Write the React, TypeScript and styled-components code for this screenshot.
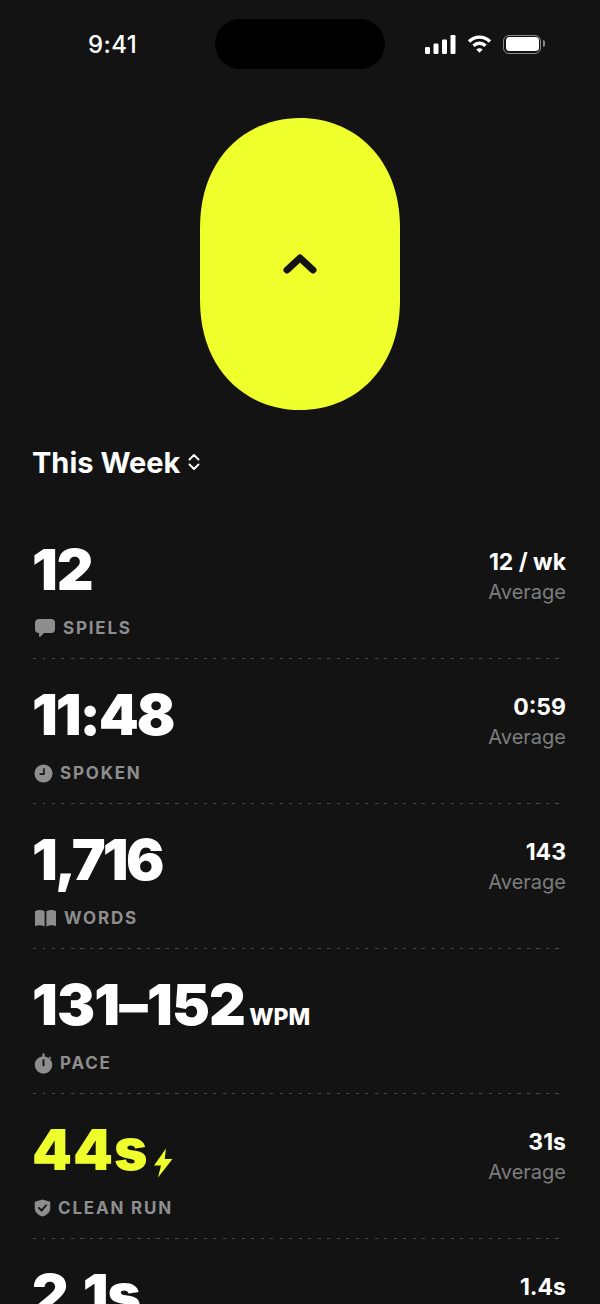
import { createGlobalStyle, styled } from 'styled-components';
import type { ReactNode } from 'react';

const GlobalStyle = createGlobalStyle`
    html, body {
        margin: 0;
        padding: 0;
        background: #131313;
    }
    body {
        font-family: Inter, "Liberation Sans", sans-serif;
        color: #fff;
    }
`

interface IStat {
    value: string
    track: number
    unit?: string
    label?: string
    icon?: ReactNode
    side?: string
    sideLabel?: string
    accent?: boolean
    bolt?: boolean
}

const Chat = () => (
    <svg width="22" height="20" viewBox="0 0 22 20" fill="#8e8e8e">
        <path d="M5 1h12a4 4 0 0 1 4 4v6a4 4 0 0 1-4 4h-7l-4 4c-.4.3-.9 0-.9-.4V15H5a4 4 0 0 1-4-4V5a4 4 0 0 1 4-4z" />
    </svg>
)

const Clock = () => (
    <svg width="19" height="19" viewBox="0 0 20 20">
        <circle cx="10" cy="10" r="9.5" fill="#8e8e8e" />
        <path d="M10.5 5v5.600H6.500" fill="none" stroke="#131313" strokeWidth="1.700" strokeLinecap="round" strokeLinejoin="round" />
    </svg>
)

const Book = () => (
    <svg width="23" height="18" viewBox="0 0 23 18" fill="#8e8e8e">
        <path d="M1 2.200C3.800.8 7.500.7 10.600 2.200V17.400C7.500 16 3.800 16 1 17z" />
        <path d="M22 2.200C19.200.8 15.500.7 12.400 2.200V17.400C15.500 16 19.200 16 22 17z" />
    </svg>
)

const Stopwatch = () => (
    <svg width="19" height="21" viewBox="0 0 20 22">
        <circle cx="10" cy="12.500" r="9.200" fill="#8e8e8e" />
        <rect x="8.800" y="0.500" width="2.400" height="3.500" fill="#8e8e8e" />
        <path d="M16 4.300l1.600 1.600" stroke="#8e8e8e" strokeWidth="1.800" />
        <path d="M10 7.500v5.500" stroke="#131313" strokeWidth="2" strokeLinecap="round" />
    </svg>
)

const Shield = () => (
    <svg width="17" height="18" viewBox="0 0 16 17">
        <path d="M8 .4l7.300 2.300v6c0 3.800-3 6.400-7.300 7.900C3.700 15.100.7 12.500.7 8.700v-6z" fill="#8e8e8e" />
        <path d="M4.700 8.400l2.400 2.500 4.300-5" fill="none" stroke="#131313" strokeWidth="1.800" strokeLinecap="round" strokeLinejoin="round" />
    </svg>
)

const stats: IStat[] = [
    { value: '12', track: -1, label: 'SPIELS', icon: <Chat />, side: '12 / wk', sideLabel: 'Average' },
    { value: '11:48', track: -2, label: 'SPOKEN', icon: <Clock />, side: '0:59', sideLabel: 'Average' },
    { value: '1,716', track: -2.7, label: 'WORDS', icon: <Book />, side: '143', sideLabel: 'Average' },
    { value: '131–152', track: -0.8, unit: 'WPM', label: 'PACE', icon: <Stopwatch /> },
    { value: '44s', track: 1, label: 'CLEAN RUN', icon: <Shield />, side: '31s', sideLabel: 'Average', accent: true, bolt: true },
    // last row runs off the bottom of the screen, only the numbers show
    { value: '2.1s', track: -1, side: '1.4s' },
]

const App = () => {
    return (
        <Screen>
            <GlobalStyle />
            <StatusBar>
                <Time>9:41</Time>
                <Island />
                <StatusIcons>
                    <svg width="31" height="19" viewBox="0 0 31 19" fill="#fff">
                        <rect x="0" y="12" width="5" height="7" rx="1.200" />
                        <rect x="8.500" y="8.500" width="5" height="10.500" rx="1.200" />
                        <rect x="17" y="4.500" width="5" height="14.500" rx="1.200" />
                        <rect x="25.500" y="0" width="5" height="19" rx="1.200" />
                    </svg>
                    <svg width="25" height="18" viewBox="0 0 24 18" fill="none" stroke="#fff" strokeWidth="3.300">
                        <path d="M1.500 6.500C7.500 .6 16.500 .6 22.500 6.500" />
                        <path d="M6 10.700c3.500-3.300 8.500-3.300 12 0" />
                        <path d="M12 17.700L8.800 14.400c1.800-1.500 4.600-1.500 6.400 0z" fill="#fff" stroke="none" />
                    </svg>
                    <Battery>
                        <BatteryFill />
                    </Battery>
                </StatusIcons>
            </StatusBar>

            <Capsule>
                <svg width="36" height="22" viewBox="0 0 36 22" fill="none" stroke="#131313" strokeWidth="7" strokeLinecap="round" strokeLinejoin="round">
                    <path d="M5 17L18 5l13 12" />
                </svg>
            </Capsule>

            <PeriodPicker>
                This Week
                <svg width="14" height="18" viewBox="0 0 14 18" fill="none" stroke="#fff" strokeWidth="1.900" strokeLinecap="round" strokeLinejoin="round">
                    <path d="M2.500 6.500L7 2l4.500 4.500" />
                    <path d="M2.500 11.500L7 16l4.500-4.500" />
                </svg>
            </PeriodPicker>

            <StatList>
                {stats.map((s) => (
                    <StatRow key={s.value}>
                        <StatMain>
                            <Value $accent={s.accent} $track={s.track}>
                                {s.value}
                                {s.unit && <Unit>{s.unit}</Unit>}
                                {s.bolt && (
                                    <Bolt width="20" height="30" viewBox="0 0 20 30" fill="#eeff2b">
                                        <path d="M13 0.500L1 17.500h7L5 29.500 19.500 11h-7.800z" />
                                    </Bolt>
                                )}
                            </Value>
                            {s.label && (
                                <Label>
                                    {s.icon}
                                    {s.label}
                                </Label>
                            )}
                        </StatMain>
                        {s.side && (
                            <Side>
                                <SideValue>{s.side}</SideValue>
                                {s.sideLabel && <SideLabel>{s.sideLabel}</SideLabel>}
                            </Side>
                        )}
                    </StatRow>
                ))}
            </StatList>
        </Screen>
    )
}

const Screen = styled.div`
    width: 600px;
    height: 1304px;
    overflow: hidden;
    background: #131313;
`
const StatusBar = styled.div`
    height: 69px;
    padding-top: 19px;
    box-sizing: border-box;
    display: grid;
    grid-template-columns: 215px 170px 1fr;
    align-items: center;
`
const Time = styled.div`
    font-size: 24px;
    font-weight: 500;
    letter-spacing: 0.400px;
    text-align: center;
    padding-left: 10px;
`
const Island = styled.div`
    height: 50px;
    background: #000;
    border-radius: 25px;
`
const StatusIcons = styled.div`
    display: flex;
    align-items: center;
    gap: 11px;
    padding-left: 40px;
`
const Battery = styled.div`
    position: relative;
    width: 38px;
    height: 19px;
    box-sizing: border-box;
    padding: 1.500px;
    border: 1.500px solid #8a8a8a;
    border-radius: 6px;
    &::after {
        content: '';
        position: absolute;
        right: -5px;
        top: 4.500px;
        width: 2.500px;
        height: 7px;
        background: #8a8a8a;
        border-radius: 0 2px 2px 0;
    }
`
const BatteryFill = styled.div`
    height: 100%;
    background: #fff;
    border-radius: 3.500px;
`
const Capsule = styled.div`
    width: 200px;
    height: 292px;
    margin: 49px auto 0;
    clip-path: path('M100 0C47 0 0 39 0 110V182C0 253 47 292 100 292C153 292 200 253 200 182V110C200 39 153 0 100 0Z');
    background: #eeff2b;
    display: flex;
    align-items: center;
    justify-content: center;
`
const PeriodPicker = styled.div`
    display: flex;
    align-items: center;
    gap: 7px;
    margin: 33px 32px 0;
    height: 38px;
    font-size: 29px;
    font-weight: 700;
`
const StatList = styled.div`
    display: flex;
    flex-direction: column;
    margin-top: 33px;
    padding: 0 34px 0 33px;
`
const StatRow = styled.div`
    display: flex;
    justify-content: space-between;
    height: 145px;
    flex-shrink: 0;
    box-sizing: border-box;
    padding-top: 26px;
    background-image: repeating-linear-gradient(to right, #4a4a4a 0 3px, transparent 3px 9.500px);
    background-size: 527px 1px;
    background-repeat: no-repeat;
    background-position: 0 100%;
`
const StatMain = styled.div`
    display: flex;
    flex-direction: column;
`
const Value = styled.div<{ $accent?: boolean; $track: number }>`
    display: flex;
    align-items: baseline;
    height: 60px;
    line-height: 60px;
    margin-left: -1px;
    font-size: 57px;
    font-weight: 900;
    letter-spacing: ${(p) => p.$track}px;
    color: ${(p) => (p.$accent ? '#eeff2b' : '#fff')};
`
const Unit = styled.span`
    margin-left: 4px;
    font-size: 23px;
    font-weight: 800;
    letter-spacing: 0;
`
const Bolt = styled.svg`
    margin-left: 4px;
    align-self: flex-end;
    margin-bottom: 2px;
`
const Label = styled.div`
    display: flex;
    align-items: center;
    gap: 7px;
    margin-top: 17px;
    margin-left: 1px;
    height: 22px;
    font-size: 17px;
    font-weight: 700;
    letter-spacing: 1.800px;
    color: #8e8e8e;
`
const Side = styled.div`
    display: flex;
    flex-direction: column;
    align-items: flex-end;
    padding-top: 7px;
`
const SideValue = styled.div`
    font-size: 23px;
    font-weight: 700;
    line-height: 30px;
`
const SideLabel = styled.div`
    font-size: 20px;
    line-height: 30px;
    color: #7d7d7d;
`

export default App
